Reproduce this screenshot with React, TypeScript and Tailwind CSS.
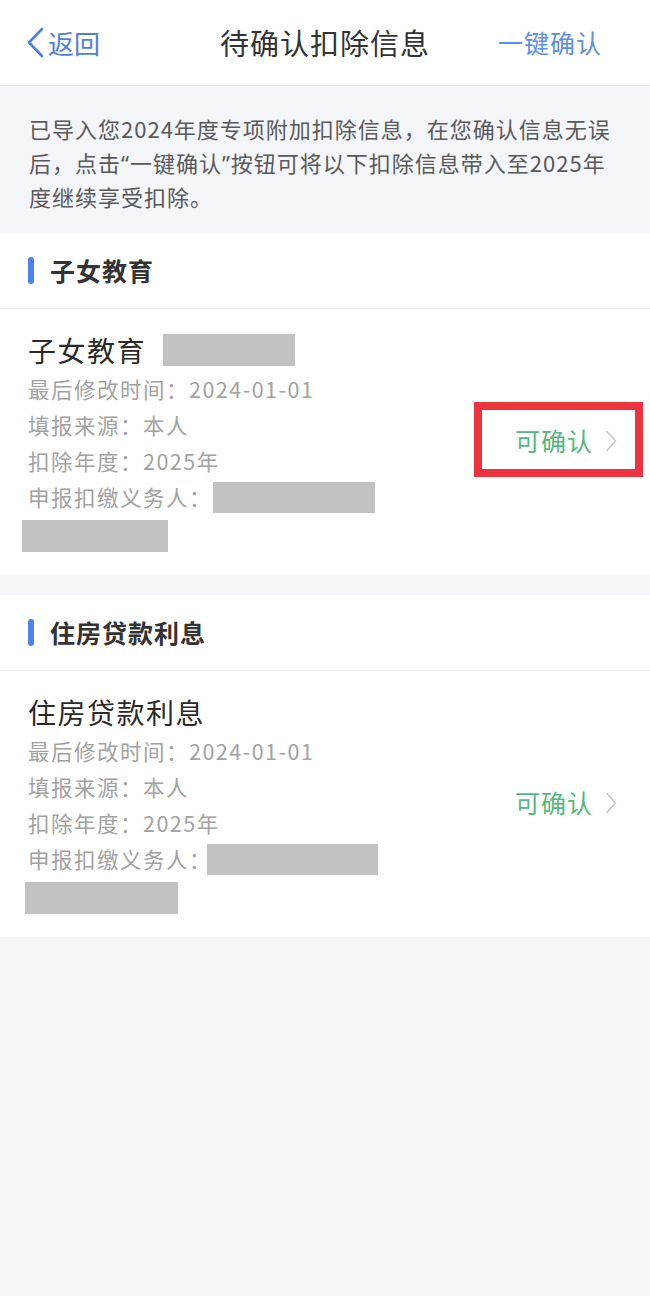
import React from "react";

const FONT = { fontFamily: '"Noto Sans CJK SC", "Noto Sans", sans-serif' };

type Item = {
  section: string;
  title: string;
  titleBox: boolean;
  agentBoxLeft: string;
  agentBoxW: string;
  lineBoxW: string;
  lineBoxLeft: string;
  highlight: boolean;
};

const items: Item[] = [
  {
    section: "子女教育",
    title: "子女教育",
    titleBox: true,
    agentBoxLeft: "ml-[1px]",
    agentBoxW: "w-[162px]",
    lineBoxW: "w-[146px]",
    lineBoxLeft: "-ml-[6px]",
    highlight: true,
  },
  {
    section: "住房贷款利息",
    title: "住房贷款利息",
    titleBox: false,
    agentBoxLeft: "-ml-[5px]",
    agentBoxW: "w-[171px]",
    lineBoxW: "w-[153px]",
    lineBoxLeft: "-ml-[3px]",
    highlight: false,
  },
];

function BackChevron() {
  return (
    <svg width="20" height="31" viewBox="0 0 20 31" fill="none">
      <path d="M17 2 L4 15.5 L17 29" stroke="#4f7fd8" strokeWidth="2.6" strokeLinecap="round" strokeLinejoin="round" />
    </svg>
  );
}

function RightChevron() {
  return (
    <svg width="12" height="22" viewBox="0 0 12 22" fill="none">
      <path d="M2 1.5 L10.5 11 L2 20.5" stroke="#c6c6c6" strokeWidth="1.6" strokeLinecap="round" strokeLinejoin="round" />
    </svg>
  );
}

function Card({ item }: { item: Item }) {
  return (
    <div className="bg-white">
      <div className="h-[76px] flex items-center pl-[28px] border-b border-[#ececf0]">
        <div className="w-[6px] h-[27px] rounded-full bg-[#4d82ea]" />
        <div className="ml-[16px] text-[25px] font-bold tracking-[1px] text-[#333333] leading-none">{item.section}</div>
      </div>
      <div className="flex items-center pl-[28px] pr-[33px] pt-[21px] pb-[23px]">
        <div className="flex-1 flex flex-col">
          <div className="h-[40px] flex items-center">
            <span className="text-[28px] tracking-[1.5px] text-[#2a2a2a] leading-none">{item.title}</span>
            {item.titleBox && <div className="ml-[17px] w-[132px] h-[32px] bg-[#c2c2c2]" />}
          </div>
          <div className="mt-[2px] flex flex-col text-[21.5px] tracking-[1.5px] text-[#a2a2a2]">
            <div className="h-[36px] flex items-center">最后修改时间：2024-01-01</div>
            <div className="h-[36px] flex items-center">填报来源：本人</div>
            <div className="h-[36px] flex items-center">扣除年度：2025年</div>
            <div className="h-[36px] flex items-center">
              <span>申报扣缴义务人：</span>
              <div className={`${item.agentBoxLeft} ${item.agentBoxW} h-[31px] bg-[#c2c2c2]`} />
            </div>
          </div>
          <div className={`mt-[4px] ${item.lineBoxLeft} ${item.lineBoxW} h-[32px] bg-[#c2c2c2]`} />
        </div>
        <div className="relative flex items-center h-[30px]">
          <span className="text-[25px] tracking-[1px] text-[#55b880] leading-none">可确认</span>
          <span className="ml-[12px] flex items-center">
            <RightChevron />
          </span>
          {item.highlight && (
            <div className="absolute left-[-41px] right-[-26px] top-[-24px] bottom-[-21px] border-[8px] border-[#ec3340]" />
          )}
        </div>
      </div>
    </div>
  );
}

const Q = ({ c }: { c: string }) => (
  <span style={{ fontFamily: '"Noto Sans", sans-serif' }}>{c}</span>
);

export default function App() {
  return (
    <div style={FONT} className="w-[650px] min-h-[1296px] bg-[#f4f5f9]">
      <div className="h-[86px] bg-white border-b border-[#e6e6ea] flex items-center relative">
        <div className="absolute left-[25px] top-0 bottom-0 flex items-center">
          <BackChevron />
          <span className="ml-[3px] text-[26px] text-[#4f7fd8] leading-none">返回</span>
        </div>
        <div className="w-full text-center text-[29px] tracking-[1px] text-[#333333] leading-none">待确认扣除信息</div>
        <div className="absolute right-[48px] top-0 bottom-0 flex items-center text-[25px] tracking-[1px] text-[#5e8fe0] leading-none">
          一键确认
        </div>
      </div>
      <div className="pl-[29px] pr-[30px] pt-[26px] pb-[19px] text-[22px] tracking-[1px] leading-[33.5px] text-[#595959]">
        已导入您2024年度专项附加扣除信息，在您确认信息无误后，点击<Q c="“" />一键确认<Q c="”" />按钮可将以下扣除信息带入至2025年度继续享受扣除。
      </div>
      <div className="flex flex-col gap-[20px]">
        {items.map((it) => (
          <Card key={it.section} item={it} />
        ))}
      </div>
    </div>
  );
}
